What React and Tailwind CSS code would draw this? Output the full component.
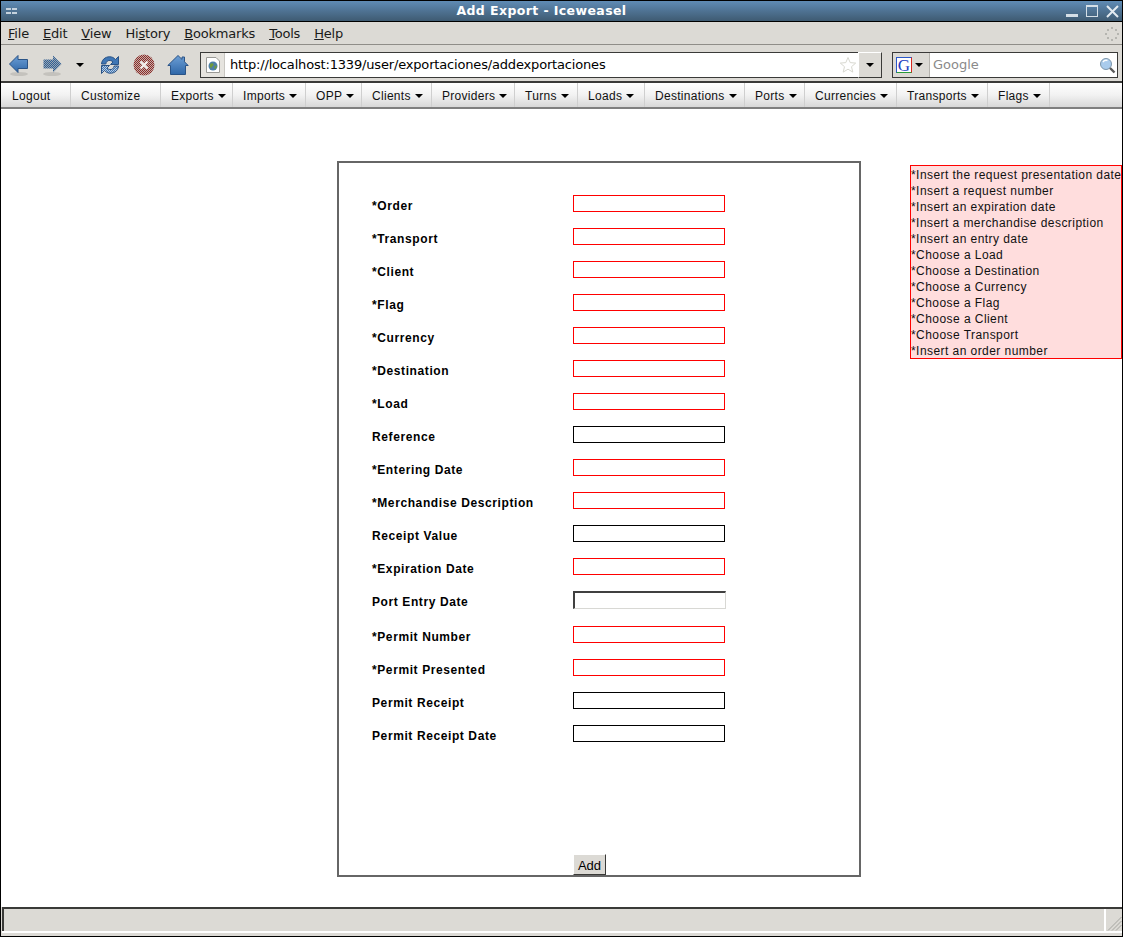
import { useState } from 'react';

const menus = [
  { label: 'File', key: 'F' },
  { label: 'Edit', key: 'E' },
  { label: 'View', key: 'V' },
  { label: 'History', key: 's' },
  { label: 'Bookmarks', key: 'B' },
  { label: 'Tools', key: 'T' },
  { label: 'Help', key: 'H' },
];

const navItems = [
  { label: 'Logout', width: 'w-[69px]' },
  { label: 'Customize', width: 'w-[90px]' },
  { label: 'Exports', width: 'w-[72px]', caret: true },
  { label: 'Imports', width: 'w-[73px]', caret: true },
  { label: 'OPP', width: 'w-[56px]', caret: true },
  { label: 'Clients', width: 'w-[70px]', caret: true },
  { label: 'Providers', width: 'w-[83px]', caret: true },
  { label: 'Turns', width: 'w-[63px]', caret: true },
  { label: 'Loads', width: 'w-[67px]', caret: true },
  { label: 'Destinations', width: 'w-[100px]', caret: true },
  { label: 'Ports', width: 'w-[60px]', caret: true },
  { label: 'Currencies', width: 'w-[92px]', caret: true },
  { label: 'Transports', width: 'w-[91px]', caret: true },
  { label: 'Flags', width: 'w-[62px]', caret: true },
];

const fields = [
  { label: '*Order', state: 'error' },
  { label: '*Transport', state: 'error' },
  { label: '*Client', state: 'error' },
  { label: '*Flag', state: 'error' },
  { label: '*Currency', state: 'error' },
  { label: '*Destination', state: 'error' },
  { label: '*Load', state: 'error' },
  { label: 'Reference' },
  { label: '*Entering Date', state: 'error' },
  { label: '*Merchandise Description', state: 'error' },
  { label: 'Receipt Value' },
  { label: '*Expiration Date', state: 'error' },
  { label: 'Port Entry Date', state: 'inset' },
  { label: '*Permit Number', state: 'error' },
  { label: '*Permit Presented', state: 'error' },
  { label: 'Permit Receipt' },
  { label: 'Permit Receipt Date' },
];

const errors = [
  '*Insert the request presentation date',
  '*Insert a request number',
  '*Insert an expiration date',
  '*Insert a merchandise description',
  '*Insert an entry date',
  '*Choose a Load',
  '*Choose a Destination',
  '*Choose a Currency',
  '*Choose a Flag',
  '*Choose a Client',
  '*Choose Transport',
  '*Insert an order number',
];

const Caret = ({ className = 'ml-[4px]' }) => (
  <span className={`inline-block w-0 h-0 border-x-[4px] border-x-transparent border-t-[4px] border-t-black align-middle ${className}`} />
);

const Dither = ({ id, a, b }) => (
  <pattern id={id} width="2" height="2" patternUnits="userSpaceOnUse">
    <rect width="2" height="2" fill={a} />
    <rect width="1" height="1" fill={b} />
    <rect x="1" y="1" width="1" height="1" fill={b} />
  </pattern>
);

const BackIcon = () => (
  <svg width="22" height="24" viewBox="0 0 22 24">
    <defs>
      <linearGradient id="backFill" x1="0" y1="0" x2="0" y2="1">
        <stop offset="0" stopColor="#6d9fd6" />
        <stop offset="1" stopColor="#2f67a8" />
      </linearGradient>
    </defs>
    <ellipse cx="11" cy="21" rx="9" ry="2" fill="#c4c2bd" />
    <path d="M1.5 11 L10 2.5 V6.5 H19.5 V15.5 H10 V19.5 Z" fill="url(#backFill)" stroke="#2a5386" strokeLinejoin="round" />
  </svg>
);

const ForwardIcon = () => (
  <svg width="22" height="24" viewBox="0 0 22 24">
    <defs>
      <Dither id="forwardDots" a="#2f5f96" b="#9aa5b0" />
    </defs>
    <ellipse cx="11" cy="21" rx="9" ry="2" fill="#c4c2bd" />
    <path d="M20.5 11 L12 2.5 V6.5 H2.5 V15.5 H12 V19.5 Z" fill="url(#forwardDots)" />
  </svg>
);

const ReloadIcon = () => (
  <svg width="22" height="22" viewBox="0 0 22 22">
    <defs>
      <Dither id="reloadDots" a="#3f76b5" b="#b9cbe0" />
    </defs>
    <path d="M2.5 10 C3 4.5 8 2 12.5 3 C14.5 3.5 15.5 4.5 16.5 5.5 L19.5 2.5 V10.5 H11.5 L14 8 C12.5 6.3 10 6 8.5 7 C7.5 7.7 7 8.7 6.8 10 Z" fill="#3f76b5" stroke="#2a5386" />
    <path d="M19.5 12 C19 17.5 14 20 9.5 19 C7.5 18.5 6.5 17.5 5.5 16.5 L2.5 19.5 V11.5 H10.5 L8 14 C9.5 15.7 12 16 13.5 15 C14.5 14.3 15 13.3 15.2 12 Z" fill="url(#reloadDots)" stroke="#2a5386" />
  </svg>
);

const StopIcon = () => (
  <svg width="22" height="22" viewBox="0 0 22 22">
    <defs>
      <Dither id="stopDots" a="#8f2a26" b="#c0b0ac" />
    </defs>
    <circle cx="11" cy="11" r="10.5" fill="url(#stopDots)" />
    <path d="M7.5 7.5 L14.5 14.5 M14.5 7.5 L7.5 14.5" stroke="#f2efec" strokeWidth="2.4" />
  </svg>
);

const HomeIcon = () => (
  <svg width="22" height="22" viewBox="0 0 22 22">
    <defs>
      <linearGradient id="homeFill" x1="0" y1="0" x2="0" y2="1">
        <stop offset="0" stopColor="#6d9fd6" />
        <stop offset="1" stopColor="#2f67a8" />
      </linearGradient>
    </defs>
    <path d="M0.8 11.5 L11 1.5 L15 5.4 V3 H17.5 V7.8 L21.2 11.5 H18.5 V20.5 H3.5 V11.5 Z" fill="url(#homeFill)" stroke="#2a5386" strokeLinejoin="round" />
  </svg>
);

const PageIcon = () => (
  <svg width="16" height="18" viewBox="0 0 16 18">
    <path d="M1.5 1.5 H11 L14.5 5 V16.5 H1.5 Z" fill="#fff" stroke="#9a9a96" />
    <circle cx="8" cy="10" r="4.5" fill="#4d7fa8" />
    <path d="M5 8 C6.5 6.5 9 7 8.5 9 C8 10.5 6 10.5 6.5 12.5 C5 12 4.5 10 5 8 Z" fill="#6f9a3c" />
    <path d="M9.5 10 L12 9.5 L11 12.5 L9.5 13 Z" fill="#6f9a3c" />
  </svg>
);

const StarIcon = () => (
  <svg width="18" height="18" viewBox="0 0 18 18">
    <path d="M9 1.5 L11.2 6.6 L16.7 7.1 L12.5 10.7 L13.8 16.1 L9 13.2 L4.2 16.1 L5.5 10.7 L1.3 7.1 L6.8 6.6 Z" fill="#fff" stroke="#d8d8d0" strokeWidth="1" />
  </svg>
);

const SearchIcon = () => (
  <svg width="17" height="17" viewBox="0 0 17 17">
    <circle cx="7" cy="7" r="5.5" fill="#a9cbec" stroke="#7d96ab" />
    <path d="M4 5 C5 3.5 7 3 8.5 3.5" stroke="#fff" strokeWidth="1.4" fill="none" />
    <path d="M11 11 L15.5 15.5" stroke="#5b5b5b" strokeWidth="2.4" />
  </svg>
);

const Spinner = () => (
  <svg width="14" height="14" viewBox="0 0 14 14" fill="#b5b5b0">
    <rect x="6" y="0" width="2" height="2" />
    <rect x="10" y="2" width="2" height="2" />
    <rect x="12" y="6" width="2" height="2" />
    <rect x="10" y="10" width="2" height="2" />
    <rect x="6" y="12" width="2" height="2" />
    <rect x="2" y="10" width="2" height="2" />
    <rect x="0" y="6" width="2" height="2" />
    <rect x="2" y="2" width="2" height="2" />
  </svg>
);

const Grip = () => (
  <svg width="16" height="16" viewBox="0 0 16 16" stroke="#a5a5a0">
    <path d="M15.5 2 L2 15.5 M15.5 6 L6 15.5 M15.5 10 L10 15.5" />
  </svg>
);

const Field = ({ label, state }) => {
  const [value, setValue] = useState('');
  let border = 'h-[17px] border border-black';
  if (state === 'error') border = 'h-[17px] border border-[#ff0000]';
  if (state === 'inset') border = 'h-[18px] border-t-2 border-l-2 border-r border-b border-t-[#404040] border-l-[#404040] border-r-[#d8d8d4] border-b-[#d8d8d4]';

  return (
    <div className={`flex items-start ${state === 'inset' ? 'h-[35px]' : 'h-[33px]'}`}>
      <label className="w-[201px] pt-[3px] text-[12px] leading-[16px] font-bold tracking-[0.6px] text-black">{label}</label>
      <input
        value={value}
        onChange={(e) => setValue(e.target.value)}
        className={`bg-white outline-none ${state === 'inset' ? 'w-[153px]' : 'w-[152px]'} ${border}`}
      />
    </div>
  );
};

const App = () => {
  return (
    <div className="w-[1123px] h-[937px] flex flex-col overflow-hidden bg-white border-l border-t border-r border-black font-['Liberation_Sans',Arial,sans-serif] text-black">
      {/* window title */}
      <div className="h-[20px] shrink-0 flex items-center justify-between bg-gradient-to-b from-[#5f8bb5] to-[#3f5b72] pl-[5px] pr-[3px]">
        <div className="w-[11px] grid grid-cols-2 gap-x-[1px] gap-y-[2px]">
          <span className="h-[2px] bg-[#c5d2dd]" />
          <span className="h-[2px] bg-[#c5d2dd]" />
          <span className="h-[2px] bg-[#c5d2dd]" />
          <span className="h-[2px] bg-[#c5d2dd]" />
        </div>
        <span className="text-[12.5px] font-bold tracking-[0.4px] text-white font-['DejaVu_Sans',sans-serif]">Add Export - Iceweasel</span>
        <div className="flex items-center gap-[8px]">
          <span className="w-[12px] h-[3px] mt-[8px] bg-[#d5dfe7]" />
          <span className="w-[12px] h-[12px] border border-[#d5dfe7] border-t-2" />
          <svg width="13" height="13" viewBox="0 0 13 13" stroke="#e4ebf0" strokeWidth="2"><path d="M1 1 L12 12 M12 1 L1 12" /></svg>
        </div>
      </div>

      {/* menu bar */}
      <div className="h-[24px] shrink-0 flex items-center justify-between bg-[#dcdad5] border-t border-black border-b border-b-[#8f8d88] pt-[1px] pl-[7px] pr-[3px] text-[13px] tracking-[-0.2px] font-['DejaVu_Sans',sans-serif]">
        <div className="flex gap-[14px] text-[#1a1a1a]">
          {menus.map((menu) => {
            const at = menu.label.indexOf(menu.key);
            return (
              <span key={menu.label}>
                {menu.label.slice(0, at)}
                <span className="underline">{menu.key}</span>
                {menu.label.slice(at + 1)}
              </span>
            );
          })}
        </div>
        <Spinner />
      </div>

      {/* navigation toolbar */}
      <div className="h-[38px] shrink-0 flex items-center bg-[#dcdad5] border-b-2 border-b-[#3a3a38] pt-[4px] pl-[7px] pr-[2px]">
        <BackIcon />
        <div className="ml-[11px]"><ForwardIcon /></div>
        <Caret className="ml-[13px]" />
        <div className="ml-[15px]"><ReloadIcon /></div>
        <div className="ml-[12px]"><StopIcon /></div>
        <div className="ml-[12px]"><HomeIcon /></div>

        <div className="ml-[11px] w-[658px] h-[26px] flex items-center border border-[#3a3a38] bg-white border-r-0">
          <div className="w-[24px] h-full flex items-center justify-center bg-[#e6e4df] border-r border-[#c9c7c2]">
            <PageIcon />
          </div>
          <span className="ml-[5px] flex-1 text-[13px] tracking-[-0.17px] font-['DejaVu_Sans',sans-serif]">http://localhost:1339/user/exportaciones/addexportaciones</span>
          <div className="mr-[1px] flex"><StarIcon /></div>
        </div>
        <div className="w-[24px] h-[26px] flex items-center justify-center bg-[#dcdad5] border border-white border-r-[#3a3a38] border-b-[#3a3a38]">
          <Caret className="" />
        </div>

        <div className="ml-[10px] w-[226px] h-[26px] flex items-center border border-[#3a3a38] bg-white">
          <div className="w-[37px] h-full flex items-center gap-[3px] pl-[3px] bg-[#dcdad5] border-r border-[#b5b3ae]">
            <span className="w-[16px] h-[16px] flex items-center justify-center border border-l-[#2b58c9] border-t-[#2b58c9] border-r-[#d82a20] border-b-[#2a9a3a] bg-white text-[17px] leading-none text-[#2240c0] font-['Liberation_Serif',serif]">G</span>
            <Caret className="" />
          </div>
          <span className="ml-[3px] flex-1 text-[13px] text-[#8a8a8a] font-['DejaVu_Sans',sans-serif]">Google</span>
          <div className="mr-[1px] flex"><SearchIcon /></div>
        </div>
      </div>

      {/* site menu */}
      <div className="h-[26px] shrink-0 flex bg-gradient-to-b from-white via-[#f2f2f2] to-[#d8d8d8] border-b-2 border-b-[#7f7f7f] pl-[1px] text-[12px] tracking-[0.3px] text-[#111]">
        {navItems.map((item) => (
          <div key={item.label} className={`${item.width} shrink-0 flex items-center pl-[10px] pt-[1px] border-r border-[#cfcfcf] whitespace-nowrap`}>
            {item.label}
            {item.caret && <Caret />}
          </div>
        ))}
      </div>

      {/* page */}
      <div className="flex-1 min-h-0 flex items-start bg-white">
        <form className="ml-[336px] mt-[52px] w-[525px] h-[716px] flex flex-col border-2 border-[#666666] pl-[33px] pt-[32px]" onSubmit={(e) => e.preventDefault()}>
          <div className="flex-1 flex flex-col">
            {fields.map((field) => (
              <Field key={field.label} label={field.label} state={field.state} />
            ))}
          </div>
          <div className="flex pl-[201px]">
            <button type="submit" className="w-[33px] h-[21px] pt-[1px] bg-[#dcdad5] border border-white border-r-[#3a3a38] border-b-[#3a3a38] text-[13px] text-black">Add</button>
          </div>
        </form>

        <div className="ml-[49px] mt-[56px] w-[212px] h-[194px] border border-[#ff0000] bg-[#ffdddd] pt-[1px] text-[12px] leading-[16px] tracking-[0.44px] text-[#111]">
          {errors.map((err) => (
            <div key={err} className="whitespace-nowrap">{err}</div>
          ))}
        </div>
      </div>

      {/* status bar */}
      <div className="h-[30px] shrink-0 flex flex-col bg-[#dcdad5] border-b border-b-black">
        <div className="flex-1 flex border-t-2 border-t-[#3a3a38] border-b-2 border-b-white ml-[1px]">
          <div className="flex-1 border-l-2 border-l-[#3a3a38]" />
          <div className="w-[18px] flex items-end justify-end border-l-2 border-l-white">
            <Grip />
          </div>
        </div>
        <div className="h-[3px]" />
      </div>
    </div>
  );
};

export default App;
